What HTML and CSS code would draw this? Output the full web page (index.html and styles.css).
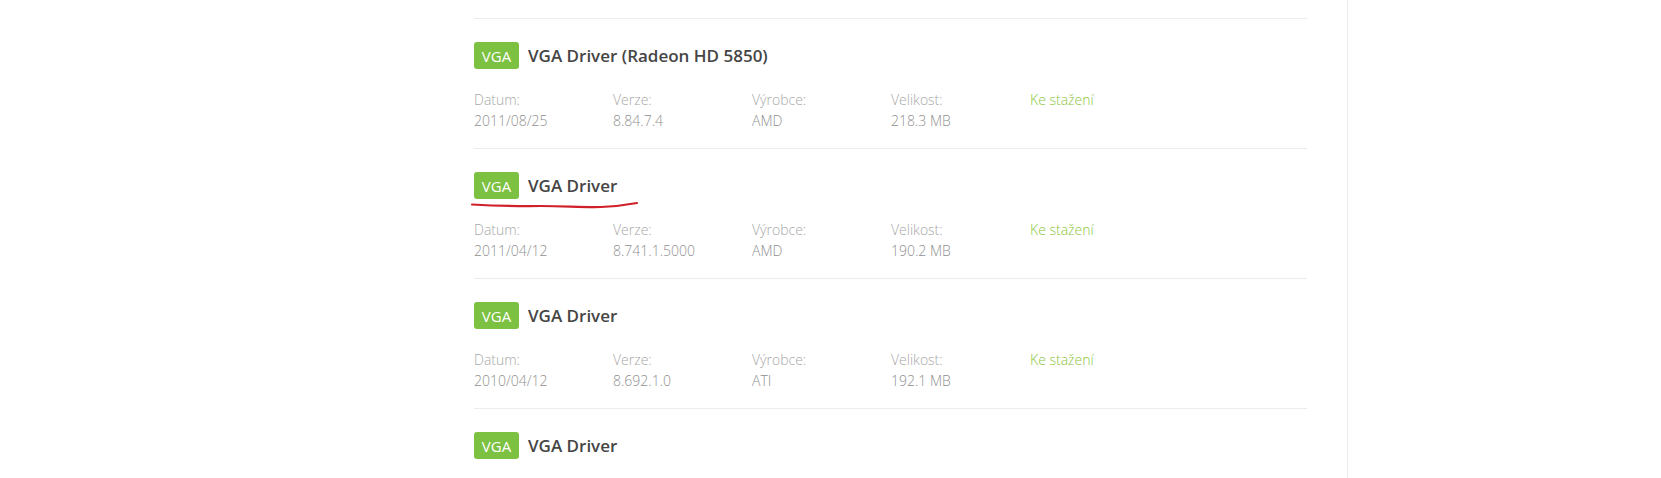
FILE: index.html
```html
<!DOCTYPE html>
<html lang="cs">
<head>
<meta charset="utf-8">
<title>Ovladače</title>
<link rel="stylesheet" href="styles.css">
</head>
<body>
<div class="page">
  <main class="main">
    <div class="item">
      <div class="head"><span class="badge">VGA</span><span class="title">VGA Driver (Radeon HD 5850)</span></div>
      <div class="details">
        <div class="col"><div class="label">Datum:</div><div class="value">2011/08/25</div></div>
        <div class="col"><div class="label">Verze:</div><div class="value">8.84.7.4</div></div>
        <div class="col"><div class="label">Výrobce:</div><div class="value">AMD</div></div>
        <div class="col"><div class="label">Velikost:</div><div class="value">218.3 MB</div></div>
        <div class="col"><a class="download" href="#">Ke stažení</a></div>
      </div>
    </div>
    <div class="item">
      <div class="head marked"><span class="badge">VGA</span><span class="title">VGA Driver</span>
        <svg class="scribble" width="170" height="12" viewBox="0 0 170 12"><path d="M1 5.5 C 20 6.5, 40 7.5, 70 7 C 95 7, 110 8.5, 130 8 C 145 7.5, 155 6, 166 4" fill="none" stroke="#d0202a" stroke-width="2.2" stroke-linecap="round"/></svg>
      </div>
      <div class="details">
        <div class="col"><div class="label">Datum:</div><div class="value">2011/04/12</div></div>
        <div class="col"><div class="label">Verze:</div><div class="value">8.741.1.5000</div></div>
        <div class="col"><div class="label">Výrobce:</div><div class="value">AMD</div></div>
        <div class="col"><div class="label">Velikost:</div><div class="value">190.2 MB</div></div>
        <div class="col"><a class="download" href="#">Ke stažení</a></div>
      </div>
    </div>
    <div class="item">
      <div class="head"><span class="badge">VGA</span><span class="title">VGA Driver</span></div>
      <div class="details">
        <div class="col"><div class="label">Datum:</div><div class="value">2010/04/12</div></div>
        <div class="col"><div class="label">Verze:</div><div class="value">8.692.1.0</div></div>
        <div class="col"><div class="label">Výrobce:</div><div class="value">ATI</div></div>
        <div class="col"><div class="label">Velikost:</div><div class="value">192.1 MB</div></div>
        <div class="col"><a class="download" href="#">Ke stažení</a></div>
      </div>
    </div>
    <div class="item">
      <div class="head"><span class="badge">VGA</span><span class="title">VGA Driver</span></div>
    </div>
  </main>
  <aside class="sidebar"></aside>
</div>
</body>
</html>
```
FILE: styles.css
```css
html, body {
  margin: 0;
  padding: 0;
  background: #fff;
}
body {
  font-family: "Open Sans", "Liberation Sans", sans-serif;
  height: 478px;
  overflow: hidden;
}
.page {
  display: flex;
  height: 478px;
}
.main {
  margin-left: 474px;
  width: 833px;
  padding-top: 18px;
  flex: none;
}
.sidebar {
  margin-left: 40px;
  border-left: 1px solid #ececec;
  flex: 1;
}
.item {
  border-top: 1px solid #ececec;
  padding: 23px 0 17px;
}
.head {
  display: flex;
  align-items: center;
  height: 27px;
  gap: 9px;
  position: relative;
}
.badge {
  display: inline-flex;
  align-items: center;
  justify-content: center;
  width: 45px;
  height: 27px;
  background: #7cc142;
  color: #fff;
  border-radius: 3px;
  font-size: 15px;
  font-weight: 500;
}
.title {
  font-size: 17px;
  font-weight: 600;
  color: #454545;
}
.scribble {
  position: absolute;
  left: -3px;
  top: 27px;
}
.details {
  display: flex;
  margin-top: 20px;
}
.col {
  width: 139px;
  font-size: 14px;
  line-height: 21px;
  font-weight: 300;
}
.label {
  color: #a8a8a8;
}
.value {
  color: #8f8f8f;
}
.download {
  color: #8cc63f;
  text-decoration: none;
  font-weight: 300;
}
```
